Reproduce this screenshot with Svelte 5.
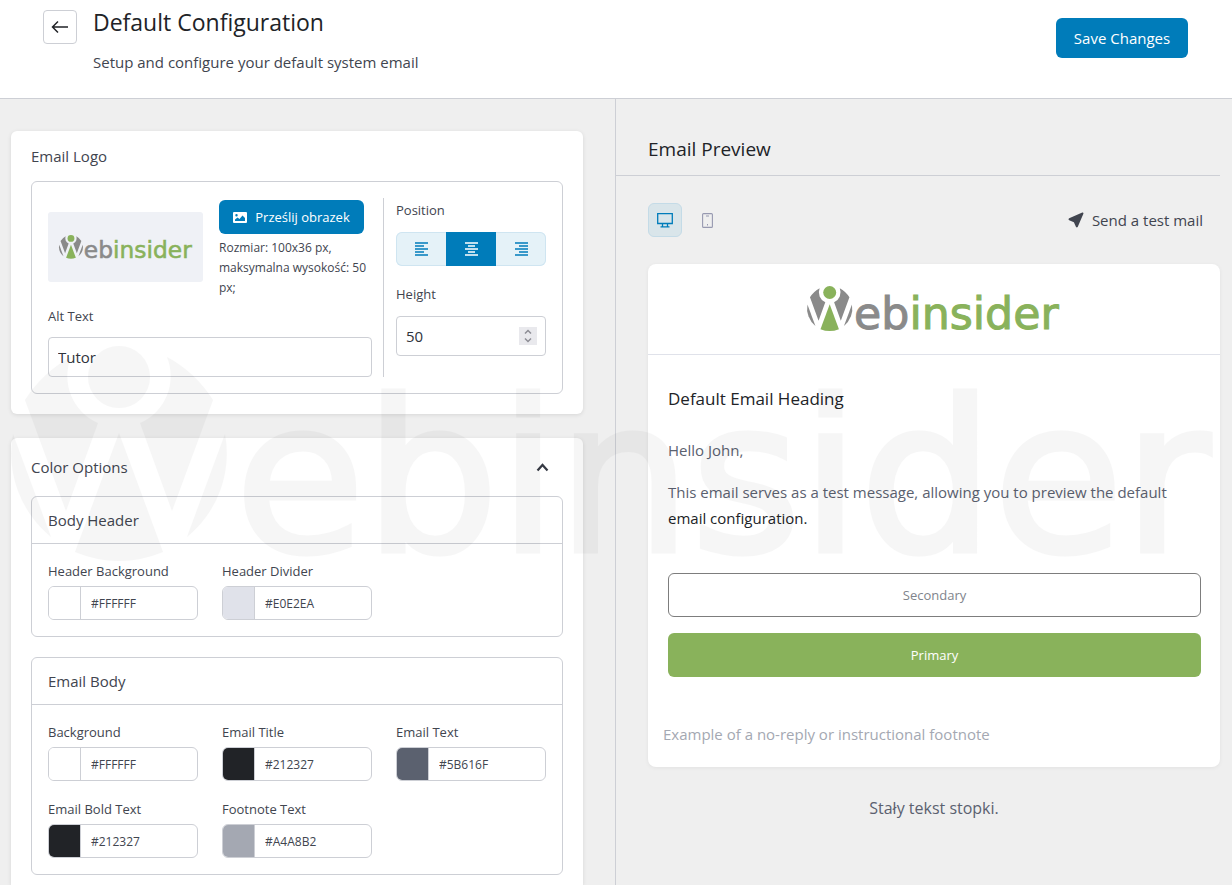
<script>
  let altText = $state('Tutor');
  let logoHeight = $state(50);
  let position = $state('center');
  let device = $state('desktop');

  let groups = $state([
    {
      title: 'Body Header',
      colors: [
        { id: 'header-bg', label: 'Header Background', value: '#FFFFFF' },
        { id: 'header-divider', label: 'Header Divider', value: '#E0E2EA' }
      ]
    },
    {
      title: 'Email Body',
      colors: [
        { id: 'body-bg', label: 'Background', value: '#FFFFFF' },
        { id: 'email-title', label: 'Email Title', value: '#212327' },
        { id: 'email-text', label: 'Email Text', value: '#5B616F' },
        { id: 'email-bold', label: 'Email Bold Text', value: '#212327' },
        { id: 'footnote', label: 'Footnote Text', value: '#A4A8B2' }
      ]
    }
  ]);

  const alignments = [
    { name: 'left', path: 'M0 1h13M0 4h9M0 7h13M0 10h9M0 13h13' },
    { name: 'center', path: 'M0 1h13M3 4h7M0 7h13M3 10h7M0 13h13' },
    { name: 'right', path: 'M0 1h13M4 4h9M0 7h13M4 10h9M0 13h13' }
  ];
</script>

{#snippet brand(extra)}
  <svg class="brand {extra}" viewBox="0 0 1210 218" role="img" aria-label="Webinsider">
    <g class="gray">
      <path d="M14 54Q32 26 60 11A51 51 0 0 0 87 77L55 165Z" />
      <path d="M202 54Q184 26 156 11A51 51 0 0 1 129 77L161 165Z" />
      <path d="M2 88L40 191A108 108 0 0 1 2 88Z" />
      <path d="M214 88L176 191A108 108 0 0 0 214 88Z" />
    </g>
    <g class="green">
      <circle cx="108" cy="31" r="31" />
      <path d="M108 87L152 206Q108 224 64 206Z" />
    </g>
    <text x="224" y="205" font-size="211"><tspan class="gray">eb</tspan><tspan class="green">insider</tspan></text>
  </svg>
{/snippet}

<div class="page">
  <header class="topbar">
    <button class="back" aria-label="Back">
      <svg width="18" height="14" viewBox="0 0 18 14"><path d="M17 7H2M7 1.5L1.5 7L7 12.5" fill="none" stroke="#212327" stroke-width="1.5" /></svg>
    </button>
    <div class="titles">
      <h1>Default Configuration</h1>
      <p>Setup and configure your default system email</p>
    </div>
    <button class="primary save">Save Changes</button>
  </header>

  <main class="columns">
    <section class="settings">
      <div class="card">
        <h2 class="card-title">Email Logo</h2>
        <div class="box logo-box">
          <div class="logo-left">
            <div class="upload">
              <div class="thumb">{@render brand('small')}</div>
              <div class="upload-info">
                <button class="primary upload-btn">
                  <svg width="14" height="11" viewBox="0 0 14 11"><path fill="#fff" fill-rule="evenodd" d="M1 0h12a1 1 0 0 1 1 1v9a1 1 0 0 1-1 1H1a1 1 0 0 1-1-1V1a1 1 0 0 1 1-1ZM2 9h10V6L9.500 3.500L6.500 7L4.500 5.500L2 7.500ZM3.500 2a1.200 1.200 0 1 0 0 2.400a1.200 1.200 0 0 0 0-2.400Z" /></svg>
                  Prześlij obrazek
                </button>
                <p>Rozmiar: 100x36 px, maksymalna wysokość: 50 px;</p>
              </div>
            </div>
            <label for="alt-text">Alt Text</label>
            <input id="alt-text" class="text-input" type="text" bind:value={altText} />
          </div>
          <div class="logo-right">
            <span class="label">Position</span>
            <div class="segments" role="group" aria-label="Position">
              {#each alignments as item}
                <button class:active={position === item.name} aria-label={item.name} onclick={() => (position = item.name)}>
                  <svg width="13" height="14" viewBox="0 0 13 14"><path d={item.path} fill="none" stroke="currentColor" stroke-width="1.6" /></svg>
                </button>
              {/each}
            </div>
            <label for="logo-height">Height</label>
            <div class="number">
              <input id="logo-height" class="text-input" type="number" bind:value={logoHeight} />
              <span class="spinner">
                <svg width="8" height="14" viewBox="0 0 8 14"><path d="M1 4.500L4 1.500L7 4.500M1 9.500L4 12.500L7 9.500" fill="none" stroke="#8d8d95" stroke-width="1.500" /></svg>
              </span>
            </div>
          </div>
        </div>
      </div>

      <div class="card grow">
        <button class="accordion">
          Color Options
          <svg width="13" height="9" viewBox="0 0 13 9"><path d="M1.500 7.500L6.500 2L11.500 7.500" fill="none" stroke="#363a44" stroke-width="2.200" /></svg>
        </button>
        <div class="groups">
          {#each groups as group}
            <div class="box">
              <h3>{group.title}</h3>
              <div class="colors">
                {#each group.colors as color}
                  <div class="field">
                    <label for={color.id}>{color.label}</label>
                    <div class="picker">
                      <input type="color" aria-label="{color.label} swatch" bind:value={color.value} />
                      <input id={color.id} type="text" bind:value={color.value} />
                    </div>
                  </div>
                {/each}
              </div>
            </div>
          {/each}
        </div>
      </div>
    </section>

    <section class="preview">
      <h2 class="preview-title">Email Preview</h2>
      <div class="toolbar">
        <button class="device" class:active={device === 'desktop'} aria-label="Desktop" onclick={() => (device = 'desktop')}>
          <svg width="16" height="15" viewBox="0 0 16 15"><path d="M.7.700h14.600v9.800H.700ZM5.500 10.500v3.300M10.500 10.500v3.300M3.500 13.900h9" fill="none" stroke="#007cba" stroke-width="1.300" /></svg>
        </button>
        <button class="device" class:active={device === 'mobile'} aria-label="Mobile" onclick={() => (device = 'mobile')}>
          <svg width="11" height="15" viewBox="0 0 11 15"><rect x=".6" y=".6" width="9.800" height="13.800" rx="1" fill="none" stroke="#9799b0" stroke-width="1.100" /><path d="M4 3h3M5.500 11v1.500" stroke="#9799b0" fill="none" /></svg>
        </button>
        <button class="send">
          <svg width="16" height="16" viewBox="0 0 16 16"><path d="M1.200 6.300L14.300 .6Q15.600 .3 15.400 1.700L9.800 14.800Q8.900 16.200 7.900 14.800L5.900 10.200L1.200 8.200Q-.2 7.200 1.200 6.300Z" fill="#41454f" /></svg>
          Send a test mail
        </button>
      </div>

      <article class="mail">
        <div class="mail-head">{@render brand('large')}</div>
        <div class="mail-body">
          <h3>Default Email Heading</h3>
          <p>Hello John,</p>
          <p>This email serves as a test message, allowing you to preview the default <strong>email configuration.</strong></p>
          <button class="mail-btn outline">Secondary</button>
          <button class="mail-btn filled">Primary</button>
        </div>
        <p class="footnote">Example of a no-reply or instructional footnote</p>
      </article>
      <p class="footer-text">Stały tekst stopki.</p>
    </section>
  </main>

  <div class="watermark" aria-hidden="true">{@render brand('mono')}</div>
</div>

<style>
  :global(body) {
    margin: 0;
    background: #efefef;
  }
  .page {
    position: relative;
    box-sizing: border-box;
    min-height: 100vh;
    display: flex;
    flex-direction: column;
    font: 15px/20px 'Open Sans', 'Noto Sans', sans-serif;
    color: #41454f;
    overflow: hidden;
  }
  .page :global(*) {
    box-sizing: border-box;
  }
  h1, h2, h3, p {
    margin: 0;
    font-weight: 400;
  }
  button, input {
    font: inherit;
    color: inherit;
    margin: 0;
  }
  button {
    padding: 0;
    border: 0;
    background: none;
    cursor: pointer;
  }
  svg {
    display: block;
    flex: none;
  }
  .topbar {
    display: flex;
    align-items: flex-start;
    height: 99px;
    padding: 10px 44px 0 43px;
    background: #fff;
    border-bottom: 1px solid #cdcfd5;
  }
  .back {
    display: grid;
    place-items: center;
    width: 34px;
    height: 34px;
    border: 1px solid #cdcfd5;
    border-radius: 4px;
  }
  .titles {
    flex: 1;
    padding-left: 16px;
  }
  h1 {
    font-size: 23px;
    line-height: 24px;
    color: #212327;
  }
  .titles p {
    margin-top: 18px;
  }
  .primary {
    display: flex;
    align-items: center;
    justify-content: center;
    background: #007cba;
    color: #fff;
    border-radius: 6px;
  }
  .save {
    margin-top: 8px;
    width: 132px;
    height: 40px;
  }
  .columns {
    flex: 1;
    display: grid;
    grid-template-columns: minmax(0, 1fr) minmax(0, 1fr);
  }
  .settings {
    display: flex;
    flex-direction: column;
    gap: 24px;
    padding: 32px 32px 0 11px;
    border-right: 1px solid #cdcfd5;
  }
  .card {
    padding: 0 20px 20px;
    background: #fff;
    border-radius: 6px;
    box-shadow: 0 1px 4px rgba(0, 0, 0, 0.1);
  }
  .card.grow {
    flex: 1;
    padding-bottom: 10px;
    border-radius: 6px 6px 0 0;
  }
  .card-title {
    font-size: 15px;
    line-height: 50px;
  }
  .box {
    border: 1px solid #cdcfd5;
    border-radius: 6px;
  }
  .logo-box {
    display: flex;
    padding: 16px;
  }
  .logo-left {
    flex: 1;
    min-width: 0;
    padding: 2px 11px 0 0;
    border-right: 1px solid #cdcfd5;
  }
  .logo-right {
    flex: none;
    width: 162px;
    padding: 2px 0 20px 12px;
  }
  .upload {
    display: flex;
    gap: 16px;
    align-items: flex-start;
    margin-bottom: 8px;
  }
  .thumb {
    flex: none;
    display: grid;
    place-items: center;
    width: 155px;
    height: 70px;
    margin-top: 12px;
    background: #eff1f6;
    border-radius: 3px;
  }
  .upload-info {
    flex: 1;
    min-width: 0;
    font-size: 12px;
  }
  .upload-info p {
    margin-top: 4px;
  }
  .upload-btn {
    gap: 8px;
    width: 145px;
    height: 34px;
    font-size: 13px;
  }
  label, .label {
    display: block;
    font-size: 13px;
    line-height: 20px;
  }
  .text-input {
    display: block;
    width: 100%;
    height: 40px;
    padding: 0 9px;
    border: 1px solid #cdcfd5;
    border-radius: 4px;
    background: #fff;
    color: #2f333b;
    appearance: none;
  }
  .logo-left .text-input {
    margin-top: 11px;
  }
  .segments {
    display: grid;
    grid-template-columns: 1fr 1fr 1fr;
    height: 34px;
    margin: 12px 0 18px;
    border-radius: 6px;
    overflow: hidden;
    background: #e5f2f8;
    box-shadow: inset 0 0 0 1px #cfe5f1;
    color: #007cba;
  }
  .segments button {
    display: grid;
    place-items: center;
  }
  .segments .active {
    background: #007cba;
    color: #fff;
  }
  .number {
    position: relative;
    margin-top: 12px;
  }
  .number input {
    appearance: textfield;
  }
  .number input::-webkit-inner-spin-button {
    appearance: none;
  }
  .spinner {
    position: absolute;
    right: 9px;
    top: 11px;
    display: grid;
    place-items: center;
    width: 18px;
    height: 18px;
    background: #e9e9ed;
    pointer-events: none;
  }
  .accordion {
    display: flex;
    align-items: center;
    justify-content: space-between;
    width: 100%;
    height: 58px;
    padding-right: 14px;
  }
  .groups {
    display: grid;
    gap: 20px;
  }
  .box h3 {
    padding-left: 16px;
    font-size: 15px;
    line-height: 46px;
    border-bottom: 1px solid #cdcfd5;
  }
  .colors {
    display: grid;
    grid-template-columns: repeat(3, minmax(0, 1fr));
    gap: 18px 24px;
    padding: 17px 16px 16px;
  }
  .picker {
    display: flex;
    height: 34px;
    margin-top: 5px;
    border: 1px solid #cdcfd5;
    border-radius: 6px;
    overflow: hidden;
  }
  .picker input {
    border: 0;
    background: none;
    min-width: 0;
    height: 100%;
  }
  .picker input[type='color'] {
    flex: none;
    width: 32px;
    padding: 0;
    appearance: none;
    border-right: 1px solid #cdcfd5;
  }
  .picker input::-webkit-color-swatch-wrapper {
    padding: 0;
  }
  .picker input::-webkit-color-swatch {
    border: 0;
    border-radius: 0;
  }
  .picker input[type='text'] {
    flex: 1;
    padding: 0 10px;
    font-size: 12px;
  }
  .preview {
    padding-right: 12px;
  }
  .preview-title {
    height: 77px;
    padding: 38px 0 0 32px;
    font-size: 19px;
    line-height: 24px;
    color: #212327;
    border-bottom: 1px solid #cdcfd5;
  }
  .toolbar {
    display: flex;
    gap: 8px;
    padding: 27px 17px 27px 32px;
  }
  .device {
    display: grid;
    place-items: center;
    width: 34px;
    height: 34px;
    border: 1px solid transparent;
    border-radius: 6px;
  }
  .device.active {
    background: #d9e5ea;
    border-color: #c4dbe7;
  }
  .send {
    display: flex;
    align-items: center;
    gap: 8px;
    margin-left: auto;
  }
  .mail {
    margin-left: 32px;
    padding-bottom: 20px;
    background: #fff;
    border-radius: 8px;
    box-shadow: 0 1px 4px rgba(0, 0, 0, 0.06);
  }
  .mail-head {
    display: grid;
    place-items: center;
    height: 91px;
    border-bottom: 1px solid #e0e2ea;
  }
  .mail-body {
    padding: 31px 19px 44px 20px;
    color: #5b616f;
    line-height: 26px;
  }
  .mail-body h3 {
    margin-bottom: 25px;
    font-size: 17px;
    color: #212327;
  }
  .mail-body p {
    margin-bottom: 16px;
  }
  .mail-body strong {
    font-weight: 400;
    color: #212327;
  }
  .mail-btn {
    display: block;
    width: 100%;
    height: 44px;
    border-radius: 6px;
    font-size: 13px;
  }
  .mail-body .outline {
    margin: 42px 0 16px;
    border: 1px solid #7d7d7d;
    background: #fff;
    color: #80848c;
  }
  .filled {
    background: #89b25b;
    color: #fff;
  }
  .footnote {
    padding: 0 15px;
    line-height: 26px;
    color: #a4a8b2;
  }
  .footer-text {
    margin: 28px 0 0 32px;
    font-size: 16px;
    line-height: 26px;
    text-align: center;
    color: #5b616f;
  }
  .brand {
    font-family: 'DejaVu Sans', sans-serif;
    overflow: visible;
  }
  .brand .gray {
    fill: #8a8a8a;
  }
  .brand .green {
    fill: #89b25b;
  }
  .brand tspan.gray {
    stroke: #8a8a8a;
    stroke-width: 5;
  }
  .brand tspan.green {
    stroke: #89b25b;
    stroke-width: 5;
  }
  .small {
    width: 134px;
  }
  .large {
    width: 254px;
  }
  .mono {
    width: 100%;
    opacity: 0.033;
  }
  .mono .gray, .mono .green {
    fill: #000;
  }
  .mono tspan.gray, .mono tspan.green {
    stroke: #000;
  }
  .watermark {
    position: absolute;
    left: 11px;
    right: 11px;
    top: 346px;
    pointer-events: none;
  }
</style>
